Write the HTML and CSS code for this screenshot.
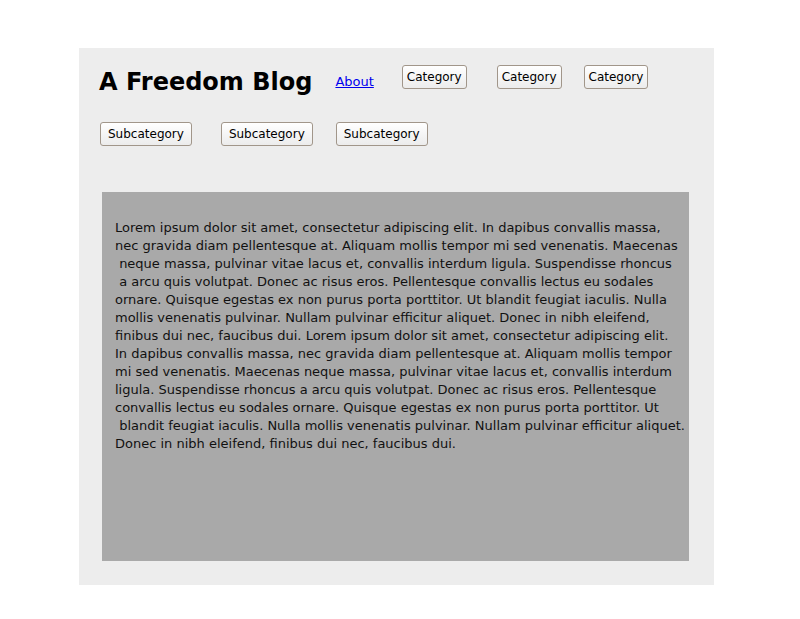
FILE: index.html
```html
<!DOCTYPE html>
<html lang="en">
<head>
<meta charset="utf-8">
<title>A Freedom Blog</title>
<link rel="stylesheet" href="styles.css">
</head>
<body>
<div class="page">
  <header class="header">
    <h1 class="title">A Freedom Blog</h1>
    <a class="about" href="#">About</a>
    <button class="btn cat cat-1">Category</button>
    <button class="btn cat cat-2">Category</button>
    <button class="btn cat cat-3">Category</button>
  </header>
  <nav class="subnav">
    <button class="btn sub sub-1">Subcategory</button>
    <button class="btn sub sub-2">Subcategory</button>
    <button class="btn sub sub-3">Subcategory</button>
  </nav>
  <main class="content">
<p class="text">Lorem ipsum dolor sit amet, consectetur adipiscing elit. In dapibus convallis massa,
nec gravida diam pellentesque at. Aliquam mollis tempor mi sed venenatis. Maecenas
 neque massa, pulvinar vitae lacus et, convallis interdum ligula. Suspendisse rhoncus
 a arcu quis volutpat. Donec ac risus eros. Pellentesque convallis lectus eu sodales
ornare. Quisque egestas ex non purus porta porttitor. Ut blandit feugiat iaculis. Nulla
mollis venenatis pulvinar. Nullam pulvinar efficitur aliquet. Donec in nibh eleifend,
finibus dui nec, faucibus dui. Lorem ipsum dolor sit amet, consectetur adipiscing elit.
In dapibus convallis massa, nec gravida diam pellentesque at. Aliquam mollis tempor
mi sed venenatis. Maecenas neque massa, pulvinar vitae lacus et, convallis interdum
ligula. Suspendisse rhoncus a arcu quis volutpat. Donec ac risus eros. Pellentesque
convallis lectus eu sodales ornare. Quisque egestas ex non purus porta porttitor. Ut
 blandit feugiat iaculis. Nulla mollis venenatis pulvinar. Nullam pulvinar efficitur aliquet.
Donec in nibh eleifend, finibus dui nec, faucibus dui.</p>
  </main>
</div>
</body>
</html>
```

FILE: styles.css
```css
html, body {
  margin: 0;
  padding: 0;
  background: #ffffff;
}

body {
  font-family: "DejaVu Sans", sans-serif;
  color: #000;
}

.page {
  box-sizing: border-box;
  width: 635px;
  height: 537px;
  margin: 48px 0 0 79px;
  padding: 17px 25px 0 20px;
  background: #ededed;
  display: flex;
  flex-direction: column;
}

.header {
  display: flex;
  align-items: flex-start;
}

.title {
  margin: 3px 0 0 0;
  font-size: 24px;
  line-height: 28px;
  font-weight: bold;
}

.about {
  margin: 9px 0 0 23px;
  font-size: 13px;
  line-height: 15px;
  color: #0000ee;
  text-decoration: underline;
}

.btn {
  font-family: "DejaVu Sans", sans-serif;
  font-size: 12px;
  line-height: 14px;
  color: #000;
  background: linear-gradient(#ffffff, #ececec);
  border: 1px solid #a1968a;
  border-radius: 3px;
  padding: 4px 4px;
  margin: 0;
  height: 24px;
  box-sizing: border-box;
}

.cat { padding: 4px 4px; }
.cat-1 { margin-left: 28px; }
.cat-2 { margin-left: 30px; }
.cat-3 { margin-left: 22px; }

.subnav {
  display: flex;
  align-items: flex-start;
  margin-top: 26px;
}

.sub { padding: 4px 7px; }
.sub-1 { margin-left: 1px; }
.sub-2 { margin-left: 29px; }
.sub-3 { margin-left: 23px; }

.content {
  box-sizing: border-box;
  width: 587px;
  height: 369px;
  margin: 46px 0 0 3px;
  padding: 14px 12px 13px 13px;
  background: #a9a9a9;
}

.text {
  margin: 13px 0;
  font-size: 13px;
  line-height: 18px;
  white-space: pre;
  color: #111;
}
```
